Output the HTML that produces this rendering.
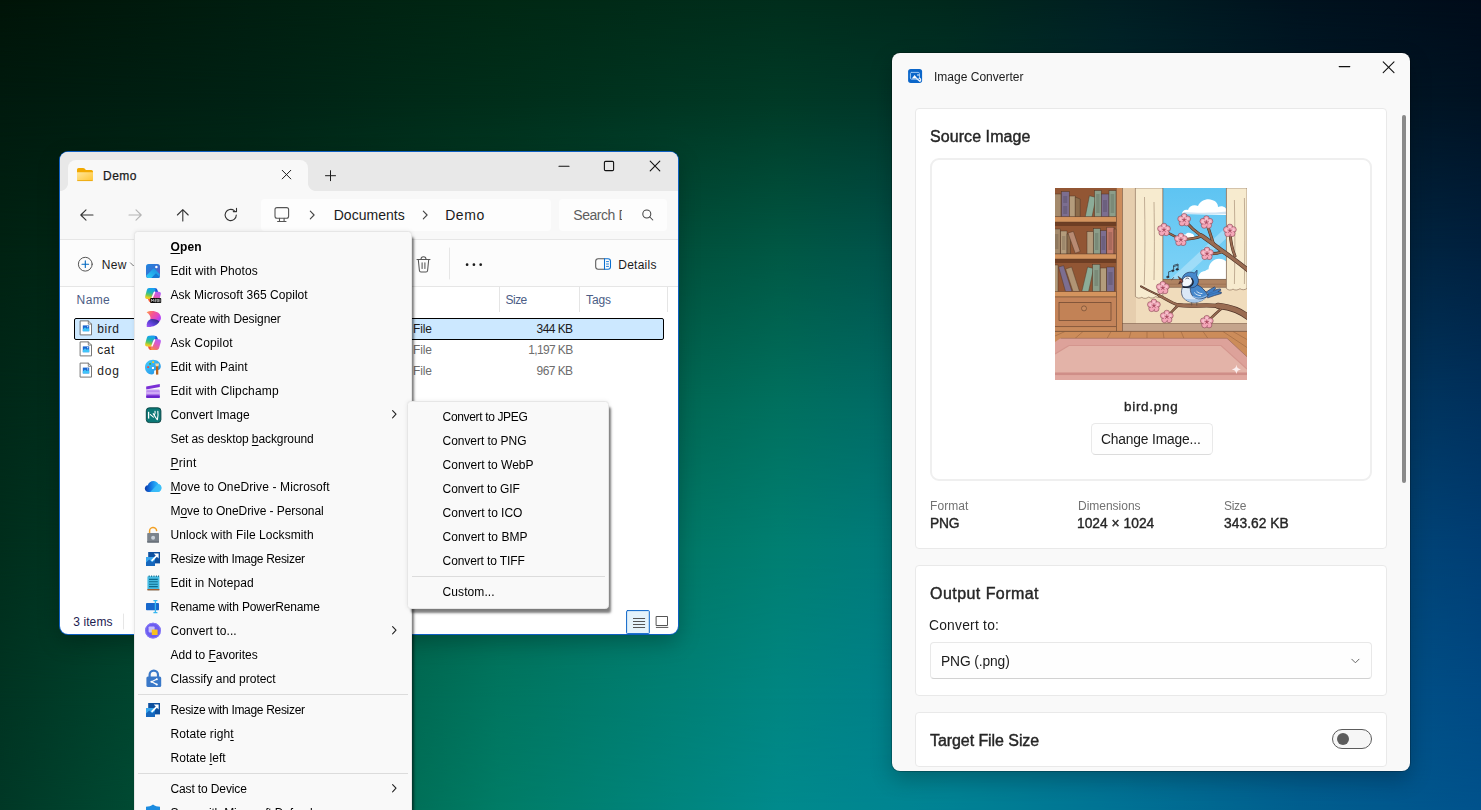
<!DOCTYPE html>
<html lang="en">
<head>
<meta charset="utf-8">
<title>Image Converter demo</title>
<style>
*{box-sizing:border-box;margin:0;padding:0}
html,body{width:1481px;height:810px;overflow:hidden}
body{position:relative;font-family:"Liberation Sans",sans-serif;color:#1b1b1b;background:#00503c}
.abs{position:absolute}
.t{position:absolute;white-space:pre;display:block}
.g .t{will-change:transform}
.t u{text-decoration-thickness:1px;text-underline-offset:1.5px}
svg{position:absolute;overflow:visible}
/* explorer */
#exp{left:60px;top:152px;width:618px;height:482px;border-radius:8px;background:#fff;overflow:hidden;
 box-shadow:0 0 0 1px #0e5fc2, 0 8px 22px rgba(0,0,0,.26)}
#exp .strip{left:0;top:0;width:618px;height:39px;background:#e8e8e8}
#exp .tab{left:8px;top:8px;width:240px;height:31px;background:#f8f8f8;border-radius:8px 8px 0 0}
#exp .nav{left:0;top:39px;width:618px;height:49px;background:#f8f8f8;border-bottom:1px solid #e6e6e6}
#exp .addr{left:201px;top:47px;width:290px;height:32px;background:#fdfdfd;border-radius:4px}
#exp .srch{left:499px;top:47px;width:108px;height:32px;background:#fdfdfd;border-radius:4px}
#exp .tool{left:0;top:88px;width:618px;height:47px;background:#fcfcfc;border-bottom:1px solid #e6e6e6}
#exp .sel{left:14px;top:166px;width:590px;height:22px;background:#cce8ff;border:1px solid #000;border-radius:2px}
#exp .csep{top:135px;width:1px;height:25px;background:#e5e5e5}
/* menus */
.menu{background:#f9f9f9;border:1px solid #e6e6e6;border-radius:3.5px}
#menu{left:134px;top:230.500px;width:278px;height:600px;box-shadow:3px 5px 2.500px -1px rgba(0,0,0,.5), 0 0 4px rgba(0,0,0,.08)}
#sub{left:406.500px;top:400.500px;width:202px;height:208.500px;box-shadow:3px 5px 2.500px -1px rgba(0,0,0,.5), 0 0 4px rgba(0,0,0,.08)}
.msep{height:1px;background:#dcdcdc}
/* image converter */
#ic{left:892px;top:53px;width:518px;height:717.800px;border-radius:8px;background:#f9f9f9;overflow:hidden;
 box-shadow:0 0 0 1px rgba(0,0,0,.22), 0 8px 22px rgba(0,0,0,.24)}
.card{background:#fff;border:1px solid #e9e9e9;border-radius:4px}
</style>
</head>
<body>
<svg id="bg" width="1481" height="810" viewBox="0 0 1481 810" style="left:0;top:0" aria-hidden="true">
<defs>
<linearGradient id="r0" x1="0" y1="0" x2="1481" y2="0" gradientUnits="userSpaceOnUse"><stop offset="0.0000" stop-color="rgb(0,20,8)"/><stop offset="0.1688" stop-color="rgb(0,30,16)"/><stop offset="0.3376" stop-color="rgb(0,40,20)"/><stop offset="0.5267" stop-color="rgb(0,46,28)"/><stop offset="0.6415" stop-color="rgb(0,40,28)"/><stop offset="0.7562" stop-color="rgb(0,30,34)"/><stop offset="0.8778" stop-color="rgb(0,18,30)"/><stop offset="1.0000" stop-color="rgb(0,12,26)"/></linearGradient>
<linearGradient id="r1" x1="0" y1="0" x2="1481" y2="0" gradientUnits="userSpaceOnUse"><stop offset="0.0000" stop-color="rgb(0,26,14)"/><stop offset="0.1688" stop-color="rgb(0,34,20)"/><stop offset="0.3376" stop-color="rgb(0,46,26)"/><stop offset="0.5267" stop-color="rgb(0,58,38)"/><stop offset="0.6415" stop-color="rgb(0,52,42)"/><stop offset="0.7562" stop-color="rgb(0,40,46)"/><stop offset="0.8778" stop-color="rgb(0,26,40)"/><stop offset="1.0000" stop-color="rgb(0,18,34)"/></linearGradient>
<linearGradient id="r2" x1="0" y1="0" x2="1481" y2="0" gradientUnits="userSpaceOnUse"><stop offset="0.0000" stop-color="rgb(0,34,18)"/><stop offset="0.1688" stop-color="rgb(0,48,28)"/><stop offset="0.3376" stop-color="rgb(0,66,44)"/><stop offset="0.5267" stop-color="rgb(0,88,68)"/><stop offset="0.6415" stop-color="rgb(0,80,78)"/><stop offset="0.7562" stop-color="rgb(0,62,80)"/><stop offset="0.8778" stop-color="rgb(0,44,70)"/><stop offset="1.0000" stop-color="rgb(0,32,62)"/></linearGradient>
<linearGradient id="r3" x1="0" y1="0" x2="1481" y2="0" gradientUnits="userSpaceOnUse"><stop offset="0.0000" stop-color="rgb(0,40,24)"/><stop offset="0.1688" stop-color="rgb(0,60,38)"/><stop offset="0.3376" stop-color="rgb(0,88,64)"/><stop offset="0.5267" stop-color="rgb(0,112,94)"/><stop offset="0.6415" stop-color="rgb(0,104,106)"/><stop offset="0.7562" stop-color="rgb(0,84,110)"/><stop offset="0.8778" stop-color="rgb(0,62,100)"/><stop offset="1.0000" stop-color="rgb(0,48,92)"/></linearGradient>
<linearGradient id="r4" x1="0" y1="0" x2="1481" y2="0" gradientUnits="userSpaceOnUse"><stop offset="0.0000" stop-color="rgb(0,46,28)"/><stop offset="0.1688" stop-color="rgb(0,72,48)"/><stop offset="0.3376" stop-color="rgb(0,106,82)"/><stop offset="0.5267" stop-color="rgb(0,127,114)"/><stop offset="0.6415" stop-color="rgb(0,120,128)"/><stop offset="0.7562" stop-color="rgb(0,100,132)"/><stop offset="0.8778" stop-color="rgb(0,78,124)"/><stop offset="1.0000" stop-color="rgb(0,62,116)"/></linearGradient>
<linearGradient id="r5" x1="0" y1="0" x2="1481" y2="0" gradientUnits="userSpaceOnUse"><stop offset="0.0000" stop-color="rgb(0,52,34)"/><stop offset="0.1688" stop-color="rgb(0,84,58)"/><stop offset="0.3376" stop-color="rgb(0,118,96)"/><stop offset="0.5267" stop-color="rgb(0,134,130)"/><stop offset="0.6415" stop-color="rgb(0,126,142)"/><stop offset="0.7562" stop-color="rgb(0,108,146)"/><stop offset="0.8778" stop-color="rgb(0,88,138)"/><stop offset="1.0000" stop-color="rgb(0,74,132)"/></linearGradient>
<linearGradient id="r6" x1="0" y1="0" x2="1481" y2="0" gradientUnits="userSpaceOnUse"><stop offset="0.0000" stop-color="rgb(0,56,38)"/><stop offset="0.1688" stop-color="rgb(0,90,62)"/><stop offset="0.3376" stop-color="rgb(0,124,102)"/><stop offset="0.5267" stop-color="rgb(0,138,140)"/><stop offset="0.6415" stop-color="rgb(0,130,148)"/><stop offset="0.7562" stop-color="rgb(0,114,148)"/><stop offset="0.8778" stop-color="rgb(0,94,142)"/><stop offset="1.0000" stop-color="rgb(0,82,140)"/></linearGradient>
<linearGradient id="vr" x1="0" y1="0" x2="0" y2="1"><stop offset="0" stop-color="#000"/><stop offset="1" stop-color="#fff"/></linearGradient>
<mask id="m0" maskUnits="userSpaceOnUse" x="0" y="0" width="1481" height="100"><rect x="0" y="0" width="1481" height="100" fill="url(#vr)"/></mask>
<mask id="m1" maskUnits="userSpaceOnUse" x="0" y="100" width="1481" height="150"><rect x="0" y="100" width="1481" height="150" fill="url(#vr)"/></mask>
<mask id="m2" maskUnits="userSpaceOnUse" x="0" y="250" width="1481" height="150"><rect x="0" y="250" width="1481" height="150" fill="url(#vr)"/></mask>
<mask id="m3" maskUnits="userSpaceOnUse" x="0" y="400" width="1481" height="150"><rect x="0" y="400" width="1481" height="150" fill="url(#vr)"/></mask>
<mask id="m4" maskUnits="userSpaceOnUse" x="0" y="550" width="1481" height="150"><rect x="0" y="550" width="1481" height="150" fill="url(#vr)"/></mask>
<mask id="m5" maskUnits="userSpaceOnUse" x="0" y="700" width="1481" height="110"><rect x="0" y="700" width="1481" height="110" fill="url(#vr)"/></mask>
</defs>
<rect x="0" y="0" width="1481" height="101" fill="url(#r0)"/>
<rect x="0" y="0" width="1481" height="100" fill="url(#r1)" mask="url(#m0)"/>
<rect x="0" y="100" width="1481" height="151" fill="url(#r1)"/>
<rect x="0" y="100" width="1481" height="150" fill="url(#r2)" mask="url(#m1)"/>
<rect x="0" y="250" width="1481" height="151" fill="url(#r2)"/>
<rect x="0" y="250" width="1481" height="150" fill="url(#r3)" mask="url(#m2)"/>
<rect x="0" y="400" width="1481" height="151" fill="url(#r3)"/>
<rect x="0" y="400" width="1481" height="150" fill="url(#r4)" mask="url(#m3)"/>
<rect x="0" y="550" width="1481" height="151" fill="url(#r4)"/>
<rect x="0" y="550" width="1481" height="150" fill="url(#r5)" mask="url(#m4)"/>
<rect x="0" y="700" width="1481" height="111" fill="url(#r5)"/>
<rect x="0" y="700" width="1481" height="110" fill="url(#r6)" mask="url(#m5)"/>
</svg>

<!-- ======================= File Explorer ======================= -->
<div id="exp" class="abs">
  <div class="abs strip"></div>
  <div class="abs tab"></div>
  <div class="abs nav"></div>
  <div class="abs" style="left:0;top:30.500px;width:8px;height:8.500px;background:radial-gradient(circle at 0 0,rgba(248,248,248,0) 7.600px,#f8f8f8 8.400px)"></div>
  <div class="abs" style="left:248px;top:30.500px;width:8px;height:8.500px;background:radial-gradient(circle at 100% 0,rgba(248,248,248,0) 7.600px,#f8f8f8 8.400px)"></div>
  <div class="abs addr"></div>
  <div class="abs srch"></div>
  <div class="abs tool"></div>
  <div class="abs csep" style="left:439px"></div>
  <div class="abs csep" style="left:519px"></div>
  <div class="abs csep" style="left:607px"></div>
  <div class="abs sel"></div>
</div>
<svg class="ico" width="1481" height="810" viewBox="0 0 1481 810" style="left:0;top:0" fill="none" stroke-linecap="round" stroke-linejoin="round">
  <defs>
    <linearGradient id="fold" x1="0" y1="0" x2="1" y2="1"><stop offset="0" stop-color="#ffe69a"/><stop offset="1" stop-color="#ffc533"/></linearGradient>
  </defs>
  <!-- tab folder icon -->
  <path d="M77 169.6a1.6 1.6 0 0 1 1.6-1.6h4.6c.6 0 1 .2 1.4.6l1.3 1.4h5.5a1.6 1.6 0 0 1 1.6 1.6v3.4H77z" fill="#f2a900"/>
  <path d="M77 172.2h16v7.2a1.6 1.6 0 0 1-1.6 1.6H78.600a1.600 1.600 0 0 1-1.600-1.600z" fill="url(#fold)"/>
  <path d="M77.600 180.600h14.800" stroke="#e9a100" stroke-width=".8"/>
  <!-- tab close / plus -->
  <path d="M282.200 170.300l8.600 8.600M290.800 170.300l-8.600 8.600" stroke="#1b1b1b" stroke-width="1"/>
  <path d="M325.500 175.700h10M330.500 170.700v10" stroke="#1b1b1b" stroke-width="1"/>
  <!-- window controls -->
  <path d="M559 166.300h10" stroke="#111" stroke-width="1.100"/>
  <rect x="604.400" y="161.400" width="9.200" height="9.200" rx="1.200" stroke="#111" stroke-width="1.100"/>
  <path d="M650.200 161.200l9.600 9.600M659.800 161.200l-9.600 9.600" stroke="#111" stroke-width="1.100"/>
  <!-- nav arrows -->
  <path d="M93 215H81M86 209.800L80.800 215l5.200 5.200" stroke="#333" stroke-width="1.100"/>
  <path d="M129 215h12M136 209.800l5.200 5.200-5.200 5.200" stroke="#b4b4b4" stroke-width="1.100"/>
  <path d="M182.800 221v-11.400M177.400 215l5.400-5.400 5.400 5.400" stroke="#333" stroke-width="1.100"/>
  <path d="M236.300 215a5.600 5.600 0 1 1-2-4.300M236.500 208.400v3.200h-3.200" stroke="#333" stroke-width="1.100"/>
  <!-- pc icon -->
  <rect x="275" y="207.600" width="13.600" height="10.600" rx="2" stroke="#555" stroke-width="1.100"/>
  <path d="M279.500 218.400v2.800M284.100 218.400v2.800M277.600 221.500h8.400" stroke="#555" stroke-width="1.100"/>
  <!-- chevrons -->
  <path d="M310.300 211.200l3.800 3.800-3.800 3.800" stroke="#444" stroke-width="1.100"/>
  <path d="M423.300 211.200l3.800 3.800-3.800 3.800" stroke="#444" stroke-width="1.100"/>
  <!-- search -->
  <circle cx="646.800" cy="214" r="4" stroke="#444" stroke-width="1.050"/>
  <path d="M649.800 217l3 3" stroke="#444" stroke-width="1.050"/>
  <!-- New -->
  <circle cx="85.300" cy="264.200" r="6.900" stroke="#555" stroke-width="1"/>
  <path d="M82 264.200h6.600M85.300 260.900v6.600" stroke="#0067c0" stroke-width="1.100"/>
  <!-- trash -->
  <path d="M417 259.500h13M421 259.300c0-1.800 1-2.600 2.500-2.600s2.500.8 2.500 2.600M418.300 259.700l1.100 10.800c.1.900.7 1.500 1.600 1.500h5c.9 0 1.500-.6 1.600-1.500l1.100-10.800" stroke="#555" stroke-width="1.050"/>
  <path d="M422.100 262.800v5.600M424.900 262.800v5.600" stroke="#555" stroke-width="1.050"/>
  <path d="M449.500 248v31" stroke="#e6e6e6" stroke-width="1"/>
  <circle cx="467.100" cy="264.700" r="1.350" fill="#1b1b1b"/><circle cx="473.900" cy="264.700" r="1.350" fill="#1b1b1b"/><circle cx="480.700" cy="264.700" r="1.350" fill="#1b1b1b"/>
  <!-- details pane icon -->
  <path d="M604.500 258.700h-6.300a2.500 2.500 0 0 0-2.500 2.500v5.600a2.500 2.500 0 0 0 2.500 2.500h6.300" stroke="#555" stroke-width="1.050"/>
  <path d="M604.500 258.700h3.500a2.500 2.500 0 0 1 2.500 2.500v5.600a2.500 2.500 0 0 1-2.500 2.500h-3.500z" stroke="#0a6fd0" stroke-width="1.050"/>
  <path d="M606.500 261.600h2M606.500 264h2M606.500 266.400h2" stroke="#0a6fd0" stroke-width=".9"/>
  <defs><g id="fi">
    <path d="M.5.500h7.800L11.500 3.700V14.500H.5z" fill="#fff" stroke="#777" stroke-width="1" stroke-linejoin="miter"/>
    <path d="M8.300.5v3.200h3.200" stroke="#777" stroke-width=".9" fill="none"/>
    <rect x="2.800" y="5" width="6.400" height="5.800" fill="#1a66d0"/>
    <path d="M2.800 10.800V9l2.200-2.200 1.700 1.600L8 7.500l1.200 1.100v2.200z" fill="#40c4f8"/>
    <circle cx="7.700" cy="6.300" r=".65" fill="#e8f4fe"/>
  </g></defs>
  <use href="#fi" x="80" y="320.400"/><use href="#fi" x="80" y="341.400"/><use href="#fi" x="80" y="362.600"/>
  <!-- status bar -->
  <path d="M123.500 614v15" stroke="#e6e6e6" stroke-width="1"/>
  <rect x="626.600" y="610.600" width="22.700" height="23" rx=".8" fill="#e5f3fb" stroke="#0a64c8" stroke-width="1"/>
  <path d="M633.400 618.500h11.300M633.400 621.500h11.300M633.400 624.500h11.300M633.400 627.500h11.300" stroke="#555" stroke-width="1"/>
  <rect x="656.500" y="616.500" width="11" height="9" stroke="#555" stroke-width="1"/>
  <path d="M656.300 627.400h11.600" stroke="#555" stroke-width="1"/>
  <path d="M130.400 262.800l3.200 3.200 3.200-3.200" stroke="#777" stroke-width="1"/>
</svg>

<span class="t" style="left:103.08px;top:170.00px;font-size:12px;line-height:12px;letter-spacing:0.406px;-webkit-text-stroke:0.25px #1b1b1b;">Demo</span>
<span class="t" style="left:333.66px;top:208.00px;font-size:14px;line-height:14px;letter-spacing:0.041px;">Documents</span>
<span class="t" style="left:445.16px;top:208.00px;font-size:14px;line-height:14px;letter-spacing:0.580px;">Demo</span>
<span class="t" style="left:101.68px;top:259.00px;font-size:12px;line-height:12px;letter-spacing:0.341px;">New</span>
<span class="t" style="left:618.28px;top:259.00px;font-size:12px;line-height:12px;letter-spacing:0.250px;">Details</span>
<span class="t" style="left:76.58px;top:294.00px;font-size:12px;line-height:12px;color:#4b5d85;letter-spacing:0.381px;">Name</span>
<span class="t" style="left:505.58px;top:294.00px;font-size:12px;line-height:12px;color:#4b5d85;letter-spacing:-0.551px;">Size</span>
<span class="t" style="left:586.08px;top:294.00px;font-size:12px;line-height:12px;color:#4b5d85;letter-spacing:-0.180px;">Tags</span>
<span class="t" style="left:97.28px;top:323.00px;font-size:12px;line-height:12px;letter-spacing:0.556px;">bird</span>
<span class="t" style="left:97.28px;top:344.00px;font-size:12px;line-height:12px;letter-spacing:0.475px;">cat</span>
<span class="t" style="left:97.28px;top:365.00px;font-size:12px;line-height:12px;letter-spacing:0.803px;">dog</span>
<span class="t" style="left:413.08px;top:323.00px;font-size:12px;line-height:12px;letter-spacing:-0.176px;">File</span>
<span class="t" style="left:413.08px;top:344.00px;font-size:12px;line-height:12px;color:#6d6d6d;letter-spacing:-0.176px;">File</span>
<span class="t" style="left:413.08px;top:365.00px;font-size:12px;line-height:12px;color:#6d6d6d;letter-spacing:-0.176px;">File</span>
<span class="t" style="left:536.58px;top:323.00px;font-size:12px;line-height:12px;letter-spacing:-0.573px;">344 KB</span>
<span class="t" style="left:528.28px;top:344.00px;font-size:12px;line-height:12px;color:#6d6d6d;letter-spacing:-0.642px;">1,197 KB</span>
<span class="t" style="left:536.58px;top:365.00px;font-size:12px;line-height:12px;color:#6d6d6d;letter-spacing:-0.573px;">967 KB</span>
<span class="t" style="left:573.36px;top:208.00px;font-size:14px;line-height:14px;color:#5e5e5e;letter-spacing:-0.480px;">Search</span>
<span class="t" style="left:618.56px;top:208.00px;font-size:14px;line-height:14px;color:#5e5e5e;letter-spacing:1.230px;width:3.2px;overflow:hidden;">Demo</span>
<span class="t" style="left:73.18px;top:616.00px;font-size:12px;line-height:12px;color:#1c2050;letter-spacing:0.107px;">3 items</span>

<!-- ======================= Image Converter ======================= -->
<div id="ic" class="abs">
  <div class="abs card" style="left:23px;top:55px;width:472px;height:441px"></div>
  <div class="abs" style="left:38px;top:105px;width:442px;height:323px;border:2px solid #efefef;border-radius:9px;background:#fff"></div>
  <div class="abs" style="left:198.500px;top:370.300px;width:122px;height:31.400px;border:1px solid #e9e9e9;border-bottom-color:#dcdcdc;border-radius:4.500px;background:#fefefe"></div>
  <div class="abs card" style="left:23px;top:512px;width:472px;height:131px"></div>
  <div class="abs" style="left:38px;top:589px;width:442px;height:37px;border:1px solid #e8e8e8;border-bottom-color:#d2d2d2;border-radius:4px;background:#fefefe"></div>
  <div class="abs card" style="left:23px;top:659px;width:472px;height:55px"></div>
  <div class="abs" style="left:440px;top:676px;width:40px;height:20px;border:1px solid #5c5c5c;border-radius:10px;background:#f6f6f6"></div>
  <div class="abs" style="left:445px;top:680px;width:12px;height:12px;border-radius:6px;background:#5c5c5c"></div>
  <div class="abs" style="left:510px;top:62px;width:4px;height:368px;border-radius:2px;background:#8a8a8a"></div>
</div>
<svg class="ico" width="1481" height="810" viewBox="0 0 1481 810" style="left:0;top:0" fill="none" stroke-linecap="round" stroke-linejoin="round">
  <!-- app icon -->
  <rect x="908.100" y="68.900" width="14" height="14" rx="2.600" fill="#0b66c9"/>
  <rect x="910.400" y="72.400" width="9" height="6.800" rx="1.200" stroke="#9cc6f2" stroke-width="1"/>
  <path d="M911.800 78.400l2.800-3.400 2.800 3.400z" fill="#fff" stroke="none"/>
  <path d="M917.400 75h1.600" stroke="#fff" stroke-width=".9"/>
  <path d="M916.600 78.600l3.200 2.600M919.400 78.200c1.400.6 1.600 2 .6 3" stroke="#e6f0fc" stroke-width="1.300"/>
  <!-- caption buttons -->
  <path d="M1339.200 66.600h10.600" stroke="#111" stroke-width="1.100"/>
  <path d="M1383.200 61.800l10.800 10.800M1394 61.800l-10.800 10.800" stroke="#111" stroke-width="1.100"/>
  <!-- select chevron -->
  <path d="M1351.800 659.200l3.600 3.600 3.600-3.600" stroke="#666" stroke-width="1"/>
</svg>

<svg id="birdimg" width="192" height="192" viewBox="0 0 192 192" style="left:1055px;top:188px;overflow:hidden" fill="none">
  <defs>
    <g id="fl">
      <g fill="#f4a6b8" stroke="#7a3a48" stroke-width=".55">
        <circle cx="0" cy="-3.700" r="2.900"/><circle cx="3.500" cy="-1.150" r="2.900"/><circle cx="2.200" cy="3" r="2.900"/><circle cx="-2.200" cy="3" r="2.900"/><circle cx="-3.500" cy="-1.150" r="2.900"/>
      </g>
      <circle r="3.300" fill="#f4a6b8"/>
      <circle cx="0" cy="-3.400" r="1.500" fill="#f8c4d0"/><circle cx="3.200" cy="-1" r="1.500" fill="#f8c4d0"/><circle cx="-3.200" cy="-1" r="1.500" fill="#f8c4d0"/>
      <path d="M0 0V-2.600M0 0L2.500-.8M0 0L1.500 2.100M0 0L-1.500 2.100M0 0L-2.500-.8" stroke="#8a3a4c" stroke-width=".6"/>
      <circle r=".9" fill="#b04860"/>
    </g>
    <linearGradient id="sky" x1="0" y1="0" x2="0" y2="1"><stop offset="0" stop-color="#5ec4f2"/><stop offset="1" stop-color="#7ed2f6"/></linearGradient>
    <clipPath id="winclip"><rect x="107.600" y="0" width="64" height="91.500"/></clipPath>
  </defs>
  <!-- wall -->
  <rect width="192" height="144" fill="#f0dcbc"/>
  <rect x="67" y="0" width="14" height="144" fill="#e6ceae"/>
  <!-- window -->
  <rect x="107.600" y="0" width="64" height="91.500" fill="url(#sky)"/>
  <g clip-path="url(#winclip)">
    <path d="M171.600 38.700V50L127 91.500H115z" fill="#b4e4f9" opacity=".65"/>
    <path d="M127 26c0-3 3-5 6-4 1-4 6-6 10-4 2-5 9-8 14-6 4 1 6 4 6 7 4-2 9 0 9 5v3z" fill="#fff"/>
    <path d="M127 26h45v-2.500c-14 1.500-30 1.500-43 .5z" fill="#cfe4f4"/>
    <path d="M143 91.500c0-5 3-8.500 7-8.500 1-1 2-1.500 3.500-1.800.5-6 5-10.500 10.500-10.500 3 0 5.500 1 7.600 3v18.300z" fill="#fff"/>
    <path d="M126 50c0-2.500 2-4 4.500-3.500 1-2 4-2.500 6-1 2 .5 3 2 3 4.500z" fill="#fff"/>
  </g>
  <!-- sill -->
  <rect x="106" y="91.200" width="66" height="8" fill="#b08462" stroke="#5a3c2c" stroke-width=".5"/>
  <path d="M106 96.200h66" stroke="#8a6248" stroke-width=".5"/>
  <path d="M107.600 0v91.500M171.600 0v91.500" stroke="#6a4a38" stroke-width=".7"/>
  <!-- curtains -->
  <path d="M80.400 0h27.400v108c-2.500 2-5 2-7 .5-2.500 2-5 2-7 .5-2.500 1.800-5 1.800-7 .300-2 1.200-4.500 1.200-6.400-.8z" fill="#f7ebcf" stroke="#6a4a38" stroke-width=".5"/>
  <path d="M89.500 9c.6 30 .6 60-.2 88M99 14c.5 28 .5 52 0 78" stroke="#8a6e58" stroke-width=".5"/>
  <path d="M171.400 0H192v100.500c-2.500 1.600-5 1.600-7 .2-2.500 1.600-5 1.800-7 .4-2 1.400-4.500 1.400-6.600-.6z" fill="#f7ebcf" stroke="#6a4a38" stroke-width=".5"/>
  <path d="M179.400 12c.6 28 .6 56 0 84M189.400 10c.5 28 .5 56 0 86" stroke="#8a6e58" stroke-width=".5"/>
  <!-- upper branch -->
  <g stroke-linecap="round" stroke-linejoin="round">
    <g stroke="#4e3226" stroke-width="4.400">
      <path d="M195 84C186 76 176 69 168 63.400S152 51 146 47.400"/>
    </g>
    <g stroke="#4e3226" stroke-width="3">
      <path d="M146 47.400C141 44 137 41 131 34"/>
      <path d="M146.500 48C141 50.600 134 51.200 126 51.500"/>
      <path d="M158.200 55C156 48 154 42 152 36"/>
      <path d="M168 63.600C163 65.600 158 66 152.500 65.800"/>
      <path d="M180 68C176.500 60 175.500 52 175 44"/>
    </g>
    <path d="M126 51.500C120 48.500 115 46 110 43" stroke="#4e3226" stroke-width="2.200"/>
    <g stroke="#9a6c52" stroke-width="3.200">
      <path d="M195 84C186 76 176 69 168 63.400S152 51 146 47.400"/>
    </g>
    <g stroke="#9a6c52" stroke-width="1.900">
      <path d="M146 47.400C141 44 137 41 131 34"/>
      <path d="M146.500 48C141 50.600 134 51.200 126 51.500"/>
      <path d="M158.200 55C156 48 154 42 152 36"/>
      <path d="M168 63.600C163 65.600 158 66 152.500 65.800"/>
      <path d="M180 68C176.500 60 175.500 52 175 44"/>
    </g>
    <path d="M126 51.500C120 48.500 115 46 110 43" stroke="#9a6c52" stroke-width="1.200"/>
  </g>
  <!-- flowers upper -->
  <use href="#fl" x="109" y="41.800"/><use href="#fl" x="129.200" y="32"/><use href="#fl" x="151.400" y="34.400"/><use href="#fl" x="174.900" y="42.700"/><use href="#fl" x="125.900" y="51.700"/><use href="#fl" x="152" y="65.700"/>
  <!-- baseboard -->
  <rect x="67" y="135.500" width="125" height="8.200" fill="#c4a48c"/>
  <path d="M67 135.500h125" stroke="#6a4a38" stroke-width=".5"/>
  <!-- bookshelf -->
  <rect x="0" y="0" width="61.500" height="109" fill="#925634"/>
  <rect x="0" y="34" width="61.500" height="4" fill="#6e3e24"/><rect x="0" y="71" width="61.500" height="4" fill="#6e3e24"/>
  <g stroke="#4a3424" stroke-width=".45">
    <!-- row 1 -->
    <rect x="-1" y="6" width="7" height="23" fill="#a48a6c"/>
    <rect x="6.400" y="3.600" width="7.800" height="25.400" fill="#7c6e90"/>
    <rect x="14.400" y="8" width="5.800" height="21" fill="#b49c7c"/>
    <path d="M20.200 9l5 2v18h-5z" fill="#8c6c4c"/>
    <path d="M34.400 7.800l6.600 1.600-4 19.600h-6.800z" fill="#8cac98"/>
    <rect x="39.600" y="2.600" width="6.600" height="26.400" fill="#8c9e8a"/>
    <rect x="46.200" y="6" width="7.800" height="23" fill="#7c6e90"/>
    <rect x="54" y="2.600" width="7" height="26.400" fill="#8c9e8a"/>
    <!-- row 2 -->
    <rect x="-1" y="41" width="6.200" height="25" fill="#a48a6c"/>
    <rect x="5.600" y="43" width="6.400" height="23" fill="#b49c7c"/>
    <rect x="12" y="46" width="3.400" height="20" fill="#8c6c4c"/>
    <path d="M13 45l5.400-1.600 6.800 20-5 1.800z" fill="#b88a72"/>
    <rect x="32" y="43.600" width="6.200" height="22.400" fill="#b49c7c"/>
    <rect x="38.400" y="40.600" width="6.800" height="25.400" fill="#8c9e8a"/>
    <rect x="45.400" y="42.600" width="6.200" height="23.400" fill="#7c6e90"/>
    <rect x="51.800" y="39.200" width="7.200" height="26.800" fill="#c27a6a"/>
    <rect x="59" y="41" width="2.500" height="25" fill="#9a6248"/>
    <!-- row 3 -->
    <rect x="-1" y="77" width="4" height="27" fill="#b49c7c"/>
    <path d="M3.600 79l5-1.400 8.400 26h-6.500z" fill="#7c6e90"/>
    <path d="M10.600 81l6-2 8 24.600h-6.600z" fill="#b09474"/>
    <path d="M32.600 79l6 1.400-5 23.200h-6.800z" fill="#8cac98"/>
    <rect x="37.600" y="76.400" width="7.400" height="27.400" fill="#8c9e8a"/>
    <rect x="45.200" y="80" width="6.400" height="23.800" fill="#b49c7c"/>
    <rect x="51.800" y="79" width="7.600" height="24.800" fill="#7c6e90"/>
  </g>
  <g fill="#000" opacity=".12">
    <rect x="8.200" y="8" width="4" height="7"/><rect x="8.200" y="18" width="4" height="8"/><rect x="41.200" y="6" width="3.400" height="19"/><rect x="48" y="12" width="4" height="12"/><rect x="55.600" y="6" width="3.600" height="19"/>
    <rect x="0" y="46" width="3.400" height="15"/><rect x="7" y="48" width="3.400" height="14"/><rect x="40" y="45" width="3.400" height="17"/><rect x="46.600" y="48" width="3.600" height="14"/><rect x="53.400" y="44" width="3.800" height="18"/><rect x="39.400" y="82" width="3.800" height="16"/><rect x="53.400" y="84" width="4.200" height="13"/>
  </g>
  <g fill="#d4945e" stroke="#5a3a28" stroke-width=".45">
    <rect x="-1" y="28.800" width="62.500" height="5.200"/>
    <rect x="-1" y="66" width="62.500" height="5"/>
    <rect x="-1" y="103.600" width="62.500" height="5.400"/>
  </g>
  <rect x="-1" y="109" width="62.500" height="30" fill="#c4845a" stroke="#5a3a28" stroke-width=".45"/>
  <rect x="4" y="114.400" width="52" height="18" fill="#c28256" stroke="#5a3a28" stroke-width=".6"/>
  <circle cx="29" cy="120.400" r="2.500" fill="#c88a5e" stroke="#5a3a28" stroke-width=".55"/>
  <rect x="-1" y="138.800" width="62.500" height="4.600" fill="#c88a5c" stroke="#5a3a28" stroke-width=".45"/>
  <rect x="61.400" y="-1" width="5.900" height="144.400" fill="#cc8c5c" stroke="#5a3a28" stroke-width=".5"/>
  <!-- floor -->
  <rect x="0" y="143.400" width="192" height="49" fill="#cc8c5a"/>
  <path d="M0 143.400h192" stroke="#5a3a28" stroke-width=".6"/>
  <path d="M10 143.500L0 148M28 143.500l-8 7M56 143.500l-4 7M76 143.500l-2 7M92 143.500v7M108 143.500l1 7M126 143.500l3 7M148 143.500l5 7M168 143.500l24 16M178 143.500l14 8" stroke="#8a5a38" stroke-width=".45"/>
  <!-- rug -->
  <path d="M5.600 150.300H172L192 168.800V192H0V154z" fill="#dda29a"/>
  <path d="M5.600 150.300H172L192 168.800" stroke="#8a5a50" stroke-width=".5"/>
  <path d="M14 157.500H166L192 181V184.600H0V166z" fill="#e3b3a8"/>
  <path d="M0 166l14-8.500H166L192 181" stroke="#d4968e" stroke-width="1.100"/>
  <rect x="0" y="184.600" width="192" height="2.600" fill="#cf8e88"/>
  <rect x="0" y="187.200" width="192" height="5" fill="#e0a8a0"/>
  <path d="M181.400 176.800c.5 3 1.600 4.100 4.600 4.600-3 .5-4.100 1.600-4.600 4.600-.5-3-1.600-4.100-4.600-4.600 3-.5 4.100-1.600 4.600-4.600z" fill="#fbeeee"/>
  <!-- lower branch -->
  <g stroke-linecap="round" stroke-linejoin="round">
    <path d="M86 98.400C94 103 100 105.500 104 107.500" stroke="#4e3226" stroke-width="2"/>
    <path d="M104 107.500C111 111 117 115 123 117" stroke="#4e3226" stroke-width="3"/>
    <path d="M123 117c6 .8 12 .8 18 .6s15-.4 22 .2" stroke="#4e3226" stroke-width="4.200"/>
    <path d="M163 117.800c7 .8 13 2.200 18 4.200s9 4.600 13 7.600" stroke="#4e3226" stroke-width="6.200"/>
    <path d="M123 117.500C119 121 116 125 112.500 128" stroke="#4e3226" stroke-width="2.400"/>
    <path d="M166 121C161 125 156.500 130 152.500 133.500" stroke="#4e3226" stroke-width="2.600"/>
    <path d="M86 98.400C94 103 100 105.500 104 107.500" stroke="#9a6c52" stroke-width="1"/>
    <path d="M104 107.500C111 111 117 115 123 117" stroke="#9a6c52" stroke-width="2"/>
    <path d="M123 117c6 .8 12 .8 18 .6s15-.4 22 .2" stroke="#9a6c52" stroke-width="3.100"/>
    <path d="M163 117.800c7 .8 13 2.200 18 4.200s9 4.600 13 7.600" stroke="#9a6c52" stroke-width="5"/>
    <path d="M123 117.500C119 121 116 125 112.500 128" stroke="#9a6c52" stroke-width="1.400"/>
    <path d="M166 121C161 125 156.500 130 152.500 133.500" stroke="#9a6c52" stroke-width="1.600"/>
  </g>
  <use href="#fl" x="107.800" y="99.900"/><use href="#fl" x="98.900" y="117.700"/><use href="#fl" x="111.800" y="128.800"/><use href="#fl" x="151.800" y="134"/>
  <!-- music notes -->
  <g stroke="#2a2a34" stroke-width=".7" fill="#2a2a34" stroke-linecap="round">
    <path d="M118.600 82.600v-5.200l4.400-1.400v5.200" fill="none"/><path d="M118.600 78.600l4.400-1.400" fill="none"/>
    <ellipse cx="117.700" cy="82.800" rx="1.100" ry=".8"/><ellipse cx="122.100" cy="81.400" rx="1.100" ry=".8"/>
    <path d="M113.600 88.800v-5l2.400-.6" fill="none"/><ellipse cx="112.700" cy="89" rx="1.100" ry=".8"/>
    <path d="M116.800 91.600c.8-.6 1.400-1.200 1.800-2" fill="none"/>
  </g>
  <!-- bird -->
  <g stroke="#27385c" stroke-width=".7" stroke-linejoin="round" stroke-linecap="round">
    <path d="M136.700 113.500v3.600M141.800 113.500v3.800" stroke="#6a5648" stroke-width=".9"/>
    <!-- tail -->
    <path d="M150.500 104.600c3.200-2.400 6-4.200 9-5.600l1.200 1.100-2.200 2.300c2.200-.9 4.400-1.400 6.800-1.500l.6 1.300-3 1.500 3.400.3-.1 1.500c-4.600 1.400-9 2.700-13.200 4.300z" fill="#3f7fc6"/>
    <path d="M153.500 105.600l8.500-3.600M154 106.800l9.500-2.800" fill="none" stroke="#2c5e9e" stroke-width=".5"/>
    <!-- body (belly) -->
    <path d="M127.800 98.600c-1.800 3.400-1.800 7.800.4 11 2.400 3.400 6.800 5 11.400 4.800 5-.2 9.800-2.400 12.400-6.400l1.400-2.200-12-9.600z" fill="#dbe8f6"/>
    <path d="M129.600 110.800c2.600 2.600 6.400 3.800 10.400 3.600 4.400-.2 8.600-2 11.200-5.200-5 1.800-14 2.600-21.600 1.600z" fill="#a9c9ea" stroke="none"/>
    <!-- wing / back -->
    <path d="M136.200 96.200c4.200-.6 8.600 1.400 12 4.800 2 2 3.600 4.200 5 6.600-2.600 2.400-6.200 3.600-10 3.200-3.600-.4-6.400-2.800-7.400-6.200-.8-2.800-.6-5.800.4-8.400z" fill="#4688cc"/>
    <path d="M139.400 104.800c1.600 1.800 3.800 2.800 6.200 2.800M141.800 103.400c1.400 1.400 3.200 2.200 5.200 2.200" fill="none" stroke="#e4eef8" stroke-width=".9"/>
    <path d="M138 108.600c3.600 2 8.800 1.800 13.400-.8" fill="none" stroke="#8db8e4" stroke-width="1.100"/>
    <!-- head -->
    <path d="M126.800 92.600c.2-4.600 3.400-8 7.800-8.400 1.800-.2 3.400.2 4.800.9l2.600-3c.3 2 .1 3.800-.5 5.400 1.600 2 2.200 4.400 1.800 6.800-.6 3-3 5-6 5.400-3 .4-6.400 0-9-.8z" fill="#4688cc"/>
    <!-- face -->
    <path d="M127 93.400c.6-3.200 3-5.200 5.800-5.200 2.400 0 4.200 1.400 4.600 3.600.4 2.600-.8 5-3.200 6.200-2 1-4.600.9-6.400.4-.8-1.400-1.100-3.200-.8-5z" fill="#f2f6fb"/>
    <!-- collar -->
    <path d="M136.600 90.600c1.600 1.600 2 4 .6 6-2 2.600-5.600 3.200-9.200 2.400" fill="none" stroke="#1a1e2c" stroke-width="1.300"/>
    <!-- eye -->
    <path d="M130.800 90.800c.9-1 2.200-1 3.100 0" fill="none" stroke="#1c2030" stroke-width=".7"/>
    <!-- beak -->
    <path d="M127.300 91.400l-4.200-3 2.200 4.200-1.600 3.200 3.800-1.600z" fill="#7a3a30" stroke="#2a1c1c" stroke-width=".5"/>
    <path d="M125.400 92.400l1.400.9" stroke="#c86a5c" stroke-width=".7"/>
  </g>
</svg>

<div class="g">
<span class="t" style="left:934.28px;top:71.00px;font-size:12px;line-height:12px;letter-spacing:0.004px;">Image Converter</span>
<span class="t" style="left:929.84px;top:129.00px;font-size:16px;line-height:16px;color:#262626;letter-spacing:0.068px;-webkit-text-stroke:0.42px #262626;">Source Image</span>
<span class="t" style="left:1123.89px;top:400.00px;font-size:13.5px;line-height:13.5px;color:#262626;letter-spacing:0.703px;-webkit-text-stroke:0.36px #262626;">bird.png</span>
<span class="t" style="left:1101.47px;top:433.00px;font-size:13.8px;line-height:13.8px;letter-spacing:-0.157px;">Change Image...</span>
<span class="t" style="left:929.68px;top:500.00px;font-size:12px;line-height:12px;color:#727272;letter-spacing:0.087px;">Format</span>
<span class="t" style="left:1077.58px;top:500.00px;font-size:12px;line-height:12px;color:#727272;letter-spacing:-0.016px;">Dimensions</span>
<span class="t" style="left:1224.38px;top:500.00px;font-size:12px;line-height:12px;color:#727272;letter-spacing:-0.326px;">Size</span>
<span class="t" style="left:929.87px;top:517.00px;font-size:13.8px;line-height:13.8px;color:#262626;letter-spacing:-0.217px;-webkit-text-stroke:0.38px #262626;">PNG</span>
<span class="t" style="left:1077.47px;top:517.00px;font-size:13.8px;line-height:13.8px;color:#262626;letter-spacing:0.013px;-webkit-text-stroke:0.38px #262626;">1024 × 1024</span>
<span class="t" style="left:1224.27px;top:517.00px;font-size:13.8px;line-height:13.8px;color:#262626;letter-spacing:0.047px;-webkit-text-stroke:0.38px #262626;">343.62 KB</span>
<span class="t" style="left:930.24px;top:586.00px;font-size:16px;line-height:16px;color:#262626;letter-spacing:0.451px;-webkit-text-stroke:0.42px #262626;">Output Format</span>
<span class="t" style="left:929.37px;top:619.00px;font-size:13.8px;line-height:13.8px;letter-spacing:0.243px;">Convert to:</span>
<span class="t" style="left:940.87px;top:655.00px;font-size:13.8px;line-height:13.8px;letter-spacing:-0.113px;">PNG (.png)</span>
<span class="t" style="left:929.64px;top:733.00px;font-size:16px;line-height:16px;color:#262626;letter-spacing:-0.072px;-webkit-text-stroke:0.42px #262626;">Target File Size</span>
</div>

<!-- ======================= Context menu ======================= -->
<div id="menu" class="abs menu">
  <div class="abs msep" style="left:3px;top:462.500px;width:270px"></div>
  <div class="abs msep" style="left:3px;top:541.500px;width:270px"></div>
</div>
<svg class="ico" width="1481" height="810" viewBox="0 0 1481 810" style="left:0;top:0" fill="none">
  <defs>
    <linearGradient id="gPh" x1="0" y1="0" x2="1" y2="1"><stop offset="0" stop-color="#1f86e0"/><stop offset=".55" stop-color="#3b6fd0"/><stop offset="1" stop-color="#7a4fc0"/></linearGradient>
    <linearGradient id="gPm" x1="0" y1="1" x2="1" y2="0"><stop offset="0" stop-color="#2fd0fa"/><stop offset="1" stop-color="#1a86dc"/></linearGradient>
    <linearGradient id="gCoL" x1=".3" y1="0" x2=".1" y2="1"><stop offset="0" stop-color="#18a0f0"/><stop offset=".35" stop-color="#20b8b0"/><stop offset=".62" stop-color="#70c850"/><stop offset=".85" stop-color="#e8d020"/><stop offset="1" stop-color="#f8b828"/></linearGradient>
    <linearGradient id="gCoR" x1=".8" y1="0" x2=".2" y2="1"><stop offset="0" stop-color="#b060f8"/><stop offset=".45" stop-color="#e058c0"/><stop offset=".8" stop-color="#f07070"/><stop offset="1" stop-color="#f89048"/></linearGradient>
    <linearGradient id="gCoT" x1="0" y1="0" x2="1" y2="0"><stop offset="0" stop-color="#2090f0"/><stop offset="1" stop-color="#1c48c8"/></linearGradient>
    <linearGradient id="gDeT" x1="0" y1="0" x2="1" y2=".6"><stop offset="0" stop-color="#ffa040"/><stop offset=".4" stop-color="#f8588c"/><stop offset=".75" stop-color="#e048c0"/><stop offset="1" stop-color="#b040f8"/></linearGradient>
    <linearGradient id="gDeB" x1="0" y1="1" x2="1" y2="0"><stop offset="0" stop-color="#a858f8"/><stop offset=".45" stop-color="#5840d8"/><stop offset="1" stop-color="#242070"/></linearGradient>
    <linearGradient id="gPa" x1="0" y1="0" x2="1" y2="1"><stop offset="0" stop-color="#48ccfc"/><stop offset="1" stop-color="#1c8ce4"/></linearGradient>
    <linearGradient id="gOd" x1="0" y1="0" x2="1" y2="0"><stop offset="0" stop-color="#0a38a8"/><stop offset=".35" stop-color="#1474e0"/><stop offset=".6" stop-color="#20a0f4"/><stop offset="1" stop-color="#44c8fa"/></linearGradient>
    <linearGradient id="gCl" x1="0" y1="0" x2="0" y2="1"><stop offset="0" stop-color="#c8a0f4"/><stop offset=".5" stop-color="#b078ec"/><stop offset="1" stop-color="#7a30d8"/></linearGradient>
    <g id="cop">
      <path d="M5.500.5h4.200c1.600 0 2.400.8 2.800 2.200l.6 1.800H8.500z" fill="url(#gCoT)"/>
      <path d="M10.500 15.500H6.300c-1.600 0-2.400-.8-2.800-2.200l-.6-1.800h4.600z" fill="url(#gCoBt)"/>
      <path d="M4 .5h4.600c1.400 0 2 .9 1.600 2.300l-2 7c-.4 1.300-1.300 2-2.600 2H2.200c-1.600 0-2.400-1.200-2-2.800l1.600-6.200C2.200 1.300 3 .5 4 .5z" fill="url(#gCoL)"/>
      <path d="M12 15.500H7.400c-1.400 0-2-.9-1.600-2.300l2-7c.4-1.300 1.300-2 2.600-2h3.400c1.600 0 2.400 1.200 2 2.800l-1.600 6.200c-.4 1.500-1.200 2.300-2.200 2.300z" fill="url(#gCoR)"/>
      <path d="M9.500 4.800L7 11.200" stroke="#fff" stroke-width="1.500" stroke-linecap="round"/>
    </g>
    <linearGradient id="gCoBt" x1="0" y1="0" x2="1" y2="0"><stop offset="0" stop-color="#f04830"/><stop offset="1" stop-color="#f89040"/></linearGradient>
    <g id="resizer">
      <rect x="2.200" y="0" width="11.800" height="11.400" fill="#0d4f9e"/>
      <rect x="0" y="5" width="9" height="9" fill="#38a6ee"/>
      <path d="M0 14V10.600L3.200 7.600 6 10.200 9 8v6z" fill="#1667bd"/>
      <path d="M5.600 8.800L11.600 2.800" stroke="#fff" stroke-width="1.700"/>
      <path d="M7.800 1.600H12.600V6.400z" fill="#fff"/>
    </g>
  </defs>

  <!-- Photos -->
  <rect x="146" y="264" width="14" height="14" rx="2.600" fill="url(#gPh)"/>
  <path d="M146.200 275.800l6.700-6.800c.6-.6 1.400-.6 2 0l4.900 5v1.600a2.400 2.400 0 0 1-2.400 2.400h-8.800a2.400 2.400 0 0 1-2.400-2.200z" fill="url(#gPm)"/>
  <path d="M151.300 278l4.700-4.700 3.800 3.700c-.4.600-1.200 1-2 1z" fill="#1778d2"/>
  <circle cx="156.400" cy="266.900" r="1.250" fill="#fff"/>

  <!-- M365 Copilot -->
  <g transform="translate(145 287.600) scale(1 .96)">
    <use href="#cop"/>
  </g>
  <rect x="150.200" y="298" width="11" height="5" rx=".8" fill="#0a0a0a"/>
  <path d="M151.500 301.800v-2.600l1.100 1.700 1.100-1.700v2.600M154.900 299.300h1.300v1.100h-1.300v1.300h1.400M157.300 301.800v-2.500h1.200v2.500zM159.300 299.300h1.200M159.300 300.500h1.200M159.300 301.700h1.200" stroke="#fff" stroke-width=".55"/>

  <!-- Designer -->
  <path d="M146.600 312.200C149 310.600 155 310.400 158 312.600C161.500 315.200 161.800 319.500 159.400 321.600C157 321 153 320 150.400 319.200C151 316.500 149.500 314 146.600 312.200z" fill="url(#gDeT)"/>
  <path d="M150.400 319.200C154 318.600 158 319.800 159.400 321.600C157.600 325.400 152 327.600 146.800 327C146.200 323.500 147.400 320.400 150.400 319.200z" fill="url(#gDeB)"/>

  <!-- Copilot -->
  <g transform="translate(145 335.400) scale(1 .94)">
    <use href="#cop"/>
  </g>

  <!-- Paint -->
  <path d="M153 359.800c4.600 0 7.800 2.800 7.800 6.600 0 2.400-1.600 3.800-3.600 3.800h-1.800c-1 0-1.500.6-1.300 1.500.3 1.500-.6 2.800-2.400 2.800-3.600 0-6.700-3-6.700-7.200 0-4.300 3.400-7.500 8-7.500z" fill="url(#gPa)"/>
  <rect x="147.200" y="366.200" width="1.900" height="1.900" rx=".4" fill="#f0483c"/><rect x="149.200" y="362.900" width="1.900" height="1.900" rx=".4" fill="#38b048"/><rect x="152.200" y="361.200" width="1.900" height="1.900" rx=".4" fill="#f8c828"/><rect x="151.900" y="366.900" width="2.100" height="2.100" rx=".4" fill="#fff"/>
  <rect x="156" y="366" width="2.300" height="8.600" fill="#b86420"/>
  <path d="M155.200 363.600h3.900l-.6 2.600h-2.700z" fill="#f4d8a4"/>

  <!-- Clipchamp -->
  <path d="M146.200 386.600l13.600-2.600v3l-13.600 2.400z" fill="#7a2ed6"/>
  <rect x="146.200" y="389.600" width="13.600" height="8.400" rx="1.200" fill="url(#gCl)"/>
  <rect x="146.200" y="392" width="13.600" height="2.200" fill="#d8b8f8" opacity=".75"/>
  <rect x="146.200" y="395.600" width="13.600" height="2.400" rx="1" fill="#6a24cc"/>

  <!-- Convert Image -->
  <rect x="146.300" y="407.800" width="14.600" height="14.800" rx="3" fill="#0b7876" stroke="#06403f" stroke-width=".9"/>
  <path d="M148.600 411.800v6.800" stroke="#fff" stroke-width="1.300"/>
  <path d="M150.400 414.600l3 2.600M153.200 413.600l3.600 5.600M155 411.200c.4 1.600.2 2.800-.6 3.800M157.800 411.200c.5 3 .3 5.600-.4 8.400" stroke="#fff" stroke-width="1.100" stroke-linecap="round"/>

  <!-- OneDrive -->
  <path d="M148.400 492c-2 0-3.600-1.500-3.600-3.400 0-1.800 1.300-3.200 3-3.400.7-2.500 3-4.300 5.600-4.300 2.300 0 4.300 1.300 5.200 3.300 1.600.2 2.800 1.600 2.800 3.800 0 2.200-1.600 4-3.600 4z" fill="url(#gOd)"/>
  <path d="M150.200 492l7.200-7.400c.5-.3 1-.4 1.500-.4 1.600.2 2.600 1.800 2.600 3.800 0 2.200-1.600 4-3.600 4z" fill="#3cc0f8" opacity=".85"/>

  <!-- File Locksmith -->
  <path d="M149.600 533.400v-2.200a3.500 3.500 0 0 1 7-.6" stroke="#f2a024" stroke-width="1.500" stroke-linecap="round"/>
  <rect x="147.200" y="533" width="11.800" height="9.600" rx=".8" fill="#7b838c"/>
  <rect x="147.200" y="541.200" width="11.800" height="1.400" fill="#666e78"/>
  <circle cx="153.100" cy="537.800" r="2" fill="#c8d0d8"/>

  <!-- Image Resizer -->
  <use href="#resizer" x="146" y="552"/>

  <!-- Notepad -->
  <rect x="147.400" y="576.200" width="12" height="14" rx=".8" fill="#46bce4"/>
  <rect x="147.400" y="589" width="12" height="1.400" fill="#a85a2c"/>
  <path d="M149.200 575.400v1.600M151.600 575.400v1.600M154 575.400v1.600M156.400 575.400v1.600M158.600 575.400v1.600" stroke="#0c6a8c" stroke-width=".9"/>
  <path d="M149 579.400h8.800M149 581.800h8.800M149 584.200h8.800M149 586.600h8.800" stroke="#0c6a8c" stroke-width="1.100"/>

  <!-- PowerRename -->
  <rect x="146" y="603" width="13" height="7.200" rx=".8" fill="#1868cc"/>
  <path d="M155.400 600.800v11.600M153.400 600.600h4M153.400 612.600h4" stroke="#38b8f0" stroke-width="1.300"/>

  <!-- Convert to... -->
  <circle cx="153" cy="630.600" r="7.900" fill="#6c5cf0"/>
  <circle cx="153" cy="630.600" r="7.400" stroke="#8e80fa" stroke-width=".8"/>
  <rect x="148.600" y="626.400" width="6" height="6" rx=".8" fill="#c8c0fa"/>
  <rect x="151.800" y="629.400" width="5.800" height="5.600" rx=".6" fill="#f8c020"/>

  <!-- Classify and protect -->
  <path d="M149.600 677v-2.200a4.200 4.200 0 0 1 8.400 0v2.200" stroke="#3a78c8" stroke-width="2.200"/>
  <rect x="146.400" y="676.400" width="14.800" height="10.600" rx="1.600" fill="#3a78c8"/>
  <path d="M156.600 679.200l-5 2.600 5 2.600" stroke="#fff" stroke-width="1.200" stroke-linecap="round" stroke-linejoin="round"/>
  <circle cx="156.800" cy="679.200" r="1" fill="#fff"/><circle cx="151.400" cy="681.800" r="1" fill="#fff"/><circle cx="156.800" cy="684.400" r="1" fill="#fff"/>

  <!-- Image Resizer (2) -->
  <use href="#resizer" x="146" y="703"/>

  <!-- Defender (top edge only visible) -->
  <path d="M153 804.600c2 1.600 4.400 2.200 7 2.200v4H146v-4c2.600 0 5-.6 7-2.200z" fill="#1c8ce0"/>

  <!-- submenu chevrons -->
  <path d="M392.600 410.600l3.400 3.600-3.400 3.600M392.600 626.600l3.400 3.600-3.400 3.600M392.600 784.600l3.400 3.600-3.400 3.600" stroke="#222" stroke-width="1.100" stroke-linecap="round" stroke-linejoin="round"/>
</svg>

<span class="t" style="left:170.48px;top:241.00px;font-size:12px;line-height:12px;font-weight:700;color:#000;letter-spacing:0.138px;"><u>O</u>pen</span>
<span class="t" style="left:170.48px;top:265.00px;font-size:12px;line-height:12px;color:#000;letter-spacing:0.075px;">Edit with Photos</span>
<span class="t" style="left:170.48px;top:289.00px;font-size:12px;line-height:12px;color:#000;letter-spacing:0.047px;">Ask Microsoft 365 Copilot</span>
<span class="t" style="left:170.48px;top:313.00px;font-size:12px;line-height:12px;color:#000;letter-spacing:-0.091px;">Create with Designer</span>
<span class="t" style="left:170.48px;top:337.00px;font-size:12px;line-height:12px;color:#000;letter-spacing:0.140px;">Ask Copilot</span>
<span class="t" style="left:170.48px;top:361.00px;font-size:12px;line-height:12px;color:#000;letter-spacing:0.080px;">Edit with Paint</span>
<span class="t" style="left:170.48px;top:385.00px;font-size:12px;line-height:12px;color:#000;letter-spacing:0.151px;">Edit with Clipchamp</span>
<span class="t" style="left:170.48px;top:409.00px;font-size:12px;line-height:12px;color:#000;letter-spacing:0.041px;">Convert Image</span>
<span class="t" style="left:170.48px;top:433.00px;font-size:12px;line-height:12px;color:#000;letter-spacing:-0.089px;">Set as desktop <u>b</u>ackground</span>
<span class="t" style="left:170.48px;top:457.00px;font-size:12px;line-height:12px;color:#000;letter-spacing:0.311px;"><u>P</u>rint</span>
<span class="t" style="left:170.48px;top:481.00px;font-size:12px;line-height:12px;color:#000;letter-spacing:0.114px;"><u>M</u>ove to OneDrive - Microsoft</span>
<span class="t" style="left:170.48px;top:505.00px;font-size:12px;line-height:12px;color:#000;letter-spacing:-0.056px;">M<u>o</u>ve to OneDrive - Personal</span>
<span class="t" style="left:170.48px;top:529.00px;font-size:12px;line-height:12px;color:#000;letter-spacing:0.072px;">Unlock with File Locksmith</span>
<span class="t" style="left:170.48px;top:553.00px;font-size:12px;line-height:12px;color:#000;letter-spacing:-0.313px;">Resize with Image Resizer</span>
<span class="t" style="left:170.48px;top:577.00px;font-size:12px;line-height:12px;color:#000;letter-spacing:0.079px;">Edit in Notepad</span>
<span class="t" style="left:170.48px;top:601.00px;font-size:12px;line-height:12px;color:#000;letter-spacing:-0.153px;">Rename with PowerRename</span>
<span class="t" style="left:170.48px;top:625.00px;font-size:12px;line-height:12px;color:#000;letter-spacing:0.067px;">Convert to...</span>
<span class="t" style="left:170.48px;top:649.00px;font-size:12px;line-height:12px;color:#000;letter-spacing:-0.010px;">Add to <u>F</u>avorites</span>
<span class="t" style="left:170.48px;top:673.00px;font-size:12px;line-height:12px;color:#000;letter-spacing:-0.008px;">Classify and protect</span>
<span class="t" style="left:170.48px;top:704.00px;font-size:12px;line-height:12px;color:#000;letter-spacing:-0.313px;">Resize with Image Resizer</span>
<span class="t" style="left:170.48px;top:728.00px;font-size:12px;line-height:12px;color:#000;letter-spacing:0.099px;">Rotate righ<u>t</u></span>
<span class="t" style="left:170.48px;top:752.00px;font-size:12px;line-height:12px;color:#000;letter-spacing:0.047px;">Rotate <u>l</u>eft</span>
<span class="t" style="left:170.48px;top:783.00px;font-size:12px;line-height:12px;color:#000;letter-spacing:-0.128px;">Cast to Device</span>
<span class="t" style="left:170.48px;top:807.00px;font-size:12px;line-height:12px;color:#000;letter-spacing:-0.156px;">Scan with Microsoft Defender...</span>

<!-- ======================= Sub menu ======================= -->
<div id="sub" class="abs menu">
  <div class="abs msep" style="left:4px;top:174.500px;width:193px"></div>
</div>
<span class="t" style="left:442.58px;top:411.00px;font-size:12px;line-height:12px;color:#000;letter-spacing:-0.347px;">Convert to JPEG</span>
<span class="t" style="left:442.58px;top:435.00px;font-size:12px;line-height:12px;color:#000;letter-spacing:-0.062px;">Convert to PNG</span>
<span class="t" style="left:442.58px;top:459.00px;font-size:12px;line-height:12px;color:#000;letter-spacing:-0.021px;">Convert to WebP</span>
<span class="t" style="left:442.58px;top:483.00px;font-size:12px;line-height:12px;color:#000;letter-spacing:-0.112px;">Convert to GIF</span>
<span class="t" style="left:442.58px;top:507.00px;font-size:12px;line-height:12px;color:#000;letter-spacing:-0.014px;">Convert to ICO</span>
<span class="t" style="left:442.58px;top:531.00px;font-size:12px;line-height:12px;color:#000;letter-spacing:0.010px;">Convert to BMP</span>
<span class="t" style="left:442.58px;top:555.00px;font-size:12px;line-height:12px;color:#000;letter-spacing:-0.112px;">Convert to TIFF</span>
<span class="t" style="left:442.58px;top:586.00px;font-size:12px;line-height:12px;color:#000;letter-spacing:0.087px;">Custom...</span>

</body>
</html>
